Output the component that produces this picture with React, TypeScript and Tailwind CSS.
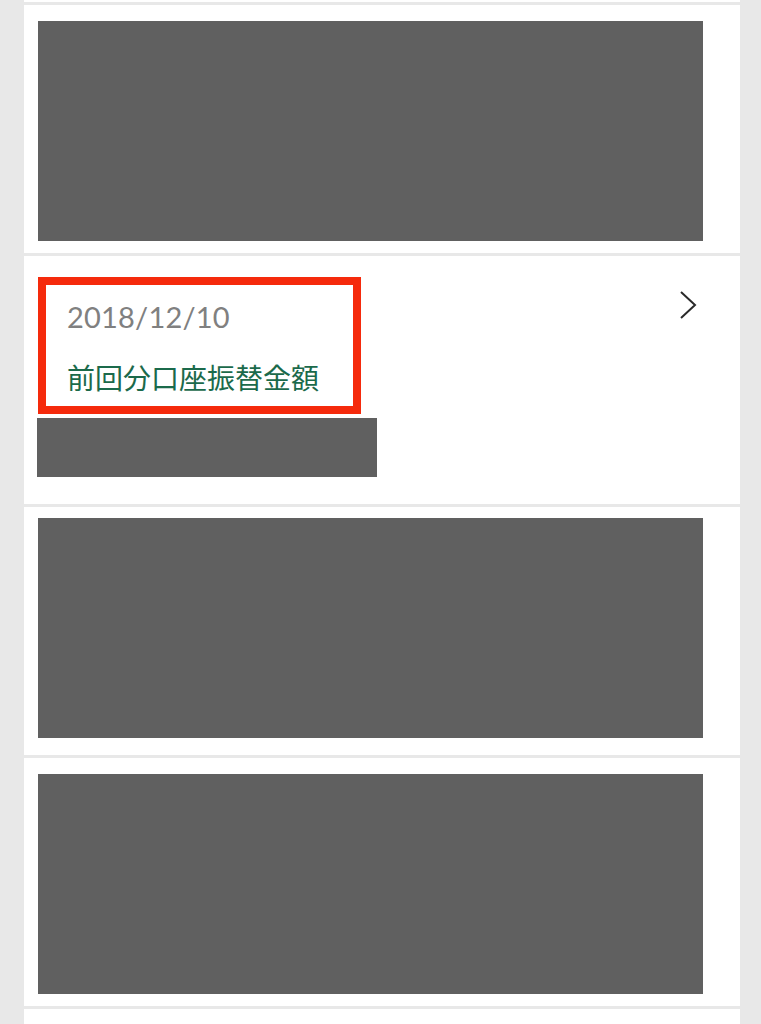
import React from 'react';

const Placeholder: React.FC<{ className?: string }> = ({ className = '' }) => (
  <div className={`bg-[#606060] ${className}`} />
);

export default function App() {
  return (
    <div className="min-h-[1024px] bg-[#e8e8e8] font-['Lato','Noto_Sans_CJK_JP',sans-serif]">
      <div className="ml-[24px] flex w-[716px] flex-col gap-[3px] overflow-hidden">
        <div className="h-[2px] bg-white" />

        <section className="h-[248px] bg-white pl-[14px] pt-[16px]">
          <Placeholder className="h-[220px] w-[665px]" />
        </section>

        <section className="flex h-[248px] bg-white pl-[14px] pr-[43px] pt-[21px]">
          <div className="flex flex-1 flex-col">
            <div className="h-[137px] w-[323px] border-[8px] border-[#f52a0c] pl-[21px] pt-[16px]">
              <p className="text-[29px] leading-[32px] tracking-[0.2px] text-[#808080]">2018/12/10</p>
              <p className="mt-[26px] font-['Noto_Sans_CJK_JP',sans-serif] text-[28px] leading-[36px] text-[#1b6a4b]">
                前回分口座振替金額
              </p>
            </div>
            <Placeholder className="-ml-px mt-[4px] h-[59px] w-[340px]" />
          </div>
          <svg width="18" height="30" viewBox="0 0 18 30" fill="none" className="mt-[13px]">
            <path d="M2 2 L16 15 L2 28" stroke="#2a2a2a" strokeWidth="2" />
          </svg>
        </section>

        <section className="h-[248px] bg-white pl-[14px] pt-[11px]">
          <Placeholder className="h-[220px] w-[665px]" />
        </section>

        <section className="h-[248px] bg-white pl-[14px] pt-[16px]">
          <Placeholder className="h-[220px] w-[665px]" />
        </section>

        <div className="h-[40px] bg-white" />
      </div>
    </div>
  );
}
